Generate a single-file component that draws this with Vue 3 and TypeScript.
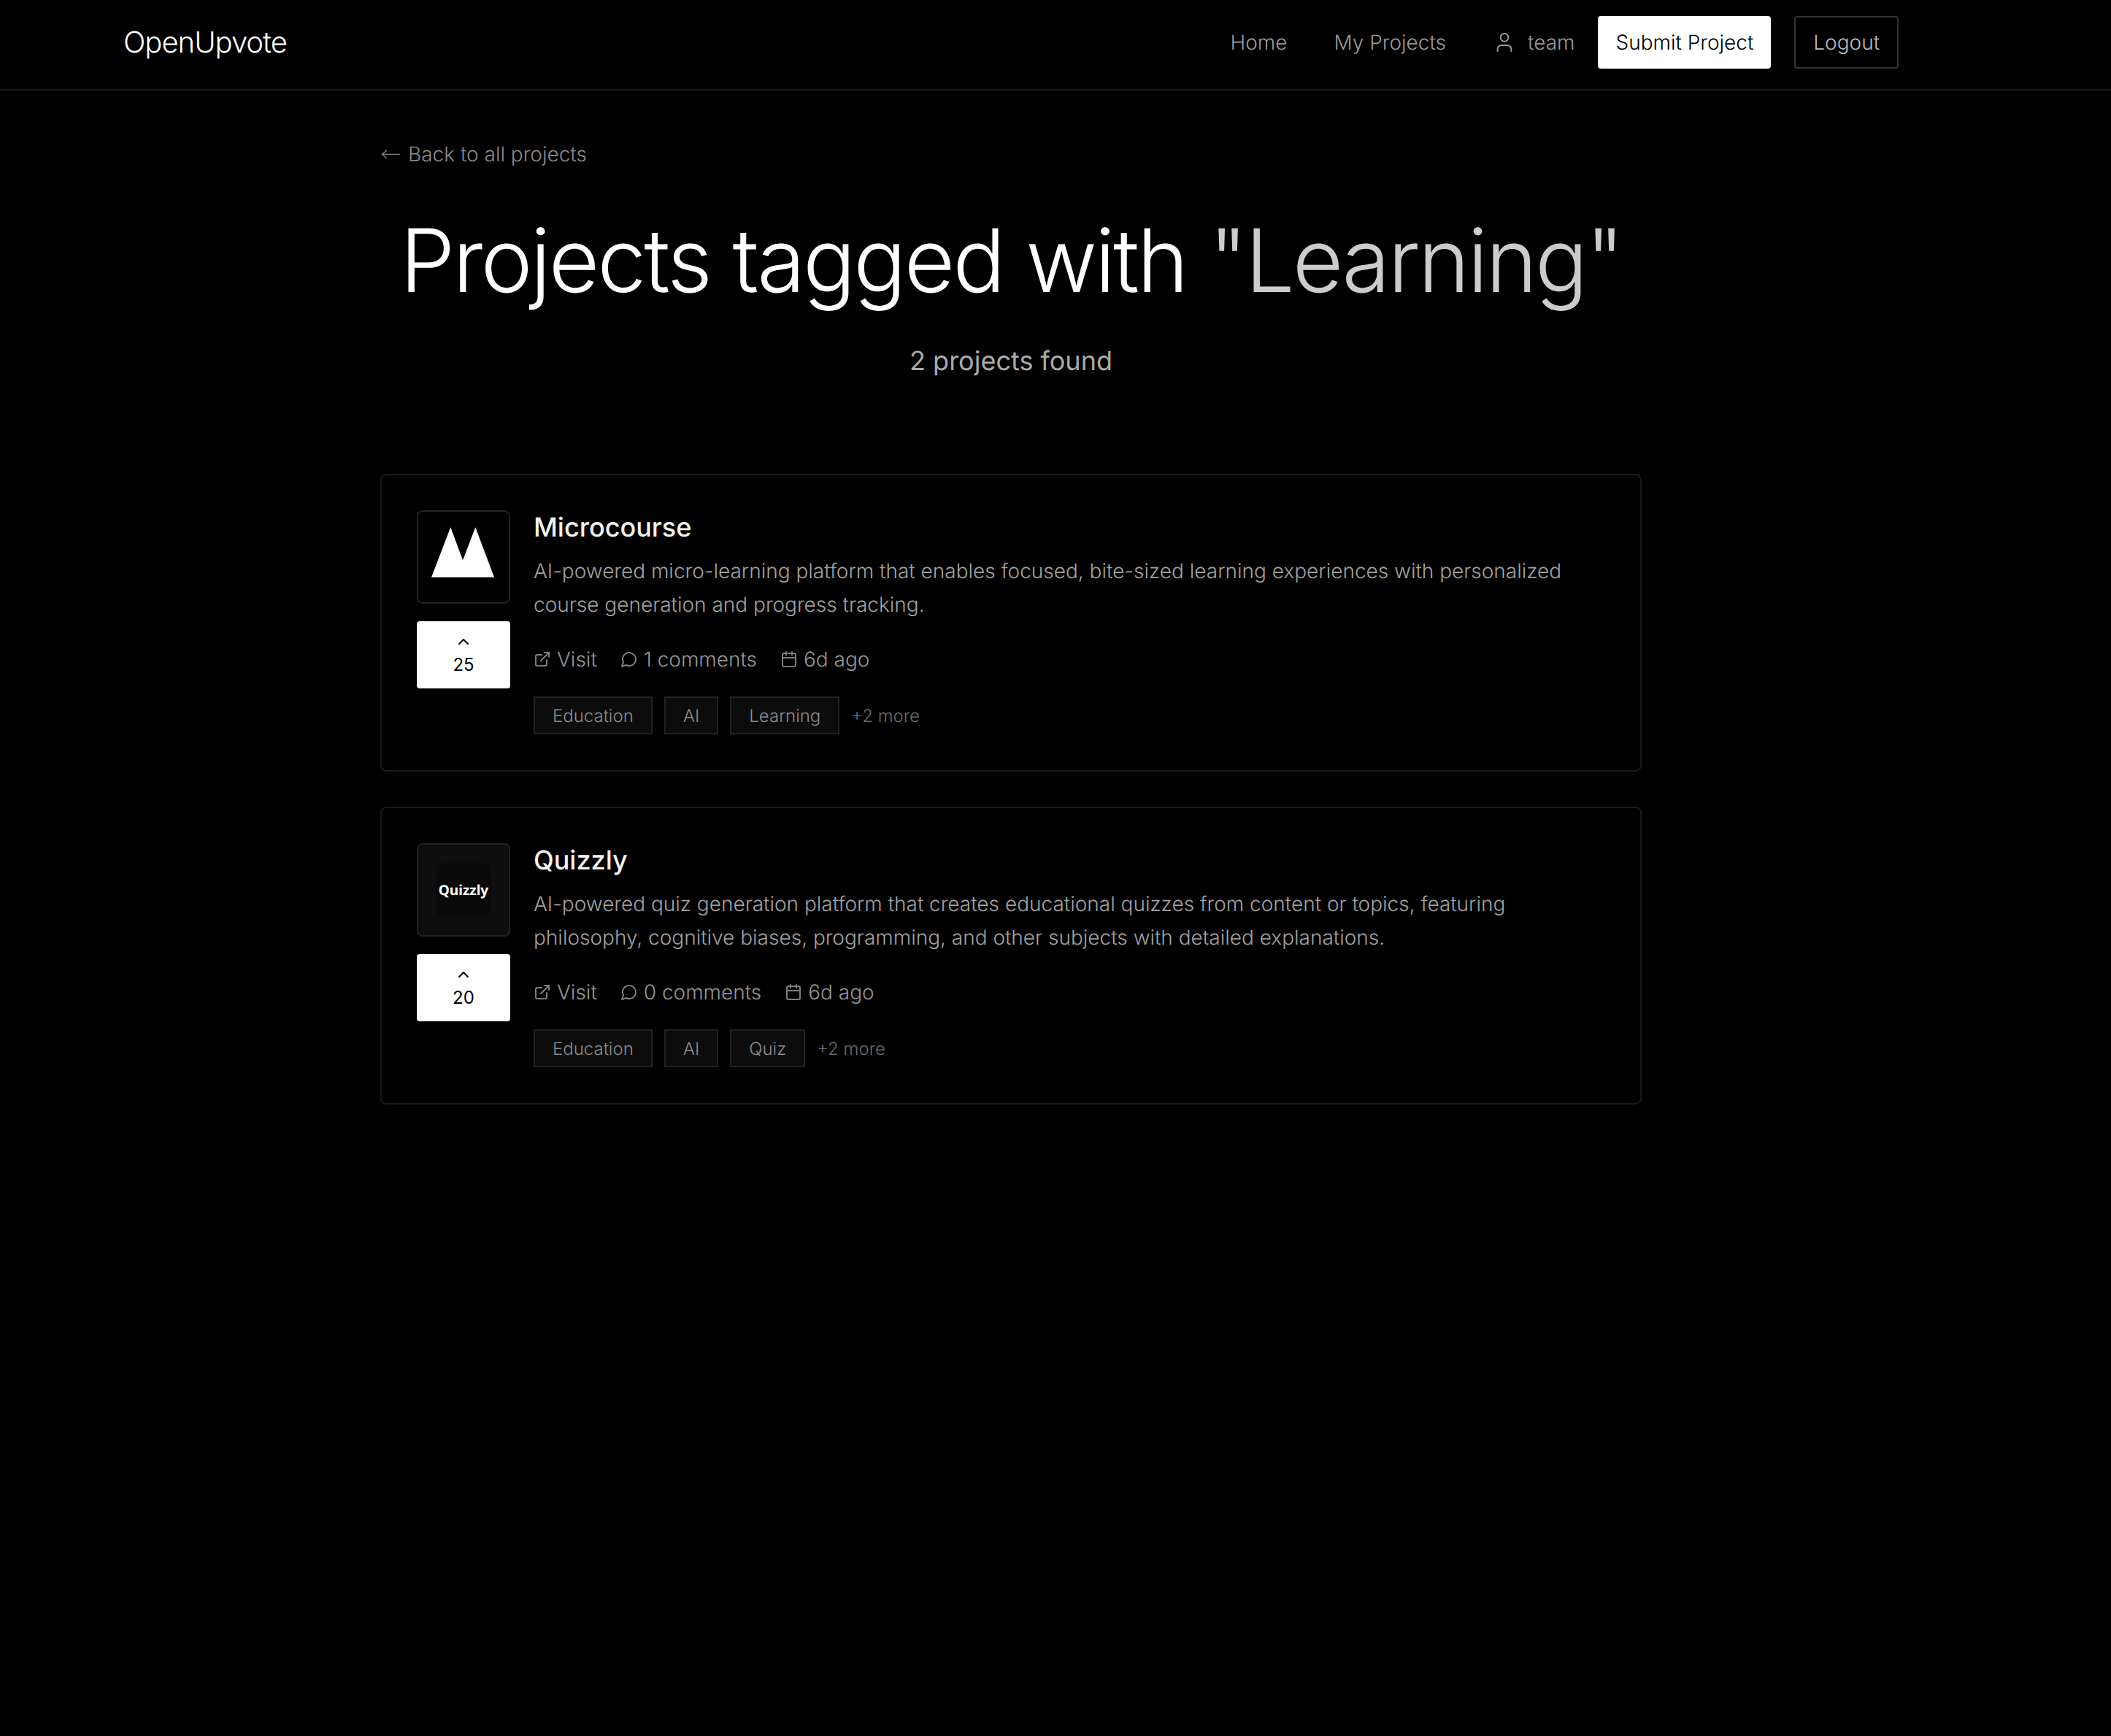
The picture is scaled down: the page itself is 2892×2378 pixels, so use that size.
<script setup lang="ts">
interface Project {
  name: string
  lines: string
  votes: number
  comments: string
  tags: string[]
  logo: 'mark' | 'text'
}

const projects: Project[] = [
  {
    name: 'Microcourse',
    lines: 'AI-powered micro-learning platform that enables focused, bite-sized learning experiences with personalized course generation and progress tracking.',
    votes: 25,
    comments: '1 comments',
    tags: ['Education', 'AI', 'Learning'],
    logo: 'mark',
  },
  {
    name: 'Quizzly',
    lines: 'AI-powered quiz generation platform that creates educational quizzes from content or topics, featuring philosophy, cognitive biases, programming, and other subjects with detailed explanations.',
    votes: 20,
    comments: '0 comments',
    tags: ['Education', 'AI', 'Quiz'],
    logo: 'text',
  },
]
</script>

<template>
  <div class="page">
    <header class="topbar">
      <div class="topbar-inner">
        <a class="brand">OpenUpvote</a>
        <nav class="nav">
          <a class="nav-link">Home</a>
          <a class="nav-link">My Projects</a>
          <span class="nav-user">
            <svg class="user-icon" viewBox="0 0 24 24" fill="none" stroke="currentColor" stroke-width="1.5" stroke-linecap="round" stroke-linejoin="round">
              <path d="M19 21v-2a4 4 0 0 0-4-4H9a4 4 0 0 0-4 4v2" />
              <circle cx="12" cy="7" r="4" />
            </svg>
            team
          </span>
          <a class="btn btn-primary">Submit Project</a>
          <a class="btn btn-outline">Logout</a>
        </nav>
      </div>
    </header>

    <div class="content">
      <main class="main">
        <a class="back"><span class="back-arrow">←</span>Back to all projects</a>
        <h1 class="title">Projects tagged with <span class="title-tag">"Learning"</span></h1>
        <p class="count">2 projects found</p>

        <div class="list">
          <article v-for="p in projects" :key="p.name" class="card">
            <div class="side">
              <div class="logo" :class="{ 'logo-soft': p.logo === 'text' }">
                <svg v-if="p.logo === 'mark'" class="logo-mark" viewBox="0 0 124 124">
                  <polygon points="18,89.7 44.3,21.3 61,66.3 78.3,21.3 104,89.7" fill="#fff" />
                </svg>
                <div v-else class="logo-word">Quizzly</div>
              </div>
              <button class="vote" type="button">
                <svg class="vote-icon" viewBox="0 0 24 24" fill="none" stroke="currentColor" stroke-width="2" stroke-linecap="round" stroke-linejoin="round">
                  <path d="m18 15-6-6-6 6" />
                </svg>
                <span class="vote-num">{{ p.votes }}</span>
              </button>
            </div>
            <div class="body">
              <h2 class="name">{{ p.name }}</h2>
              <p class="desc">{{ p.lines }}</p>
              <div class="meta">
                <span class="meta-item">
                  <svg class="meta-icon" viewBox="0 0 24 24" fill="none" stroke="currentColor" stroke-width="2" stroke-linecap="round" stroke-linejoin="round">
                    <path d="M15 3h6v6" />
                    <path d="M10 14 21 3" />
                    <path d="M18 13v6a2 2 0 0 1-2 2H5a2 2 0 0 1-2-2V8a2 2 0 0 1 2-2h6" />
                  </svg>
                  Visit
                </span>
                <span class="meta-item">
                  <svg class="meta-icon" viewBox="0 0 24 24" fill="none" stroke="currentColor" stroke-width="2" stroke-linecap="round" stroke-linejoin="round">
                    <path d="M7.9 20A9 9 0 1 0 4 16.1L2 22Z" />
                  </svg>
                  {{ p.comments }}
                </span>
                <span class="meta-item">
                  <svg class="meta-icon" viewBox="0 0 24 24" fill="none" stroke="currentColor" stroke-width="2" stroke-linecap="round" stroke-linejoin="round">
                    <path d="M8 2v4" />
                    <path d="M16 2v4" />
                    <rect x="3" y="4" width="18" height="18" rx="2" />
                    <path d="M3 10h18" />
                  </svg>
                  6d ago
                </span>
              </div>
              <div class="tags">
                <span v-for="t in p.tags" :key="t" class="tag">{{ t }}</span>
                <span class="more">+2 more</span>
              </div>
            </div>
          </article>
        </div>
      </main>
    </div>
  </div>
</template>

<style>
html,
body {
  margin: 0;
  background: #000;
}
</style>

<style scoped>
.page {
  min-height: 100vh;
  background: #000;
  color: #fff;
  font-family: Inter, "Liberation Sans", sans-serif;
  font-size: 28px;
  text-rendering: geometricPrecision;
}
.topbar {
  height: 124px;
  box-sizing: border-box;
  padding-right: 122px;
  border-bottom: 2px solid #1f1f1f;
}
.topbar-inner {
  max-width: 2560px;
  margin: 0 auto;
  padding: 22px 64px 0;
  box-sizing: border-box;
  display: flex;
  justify-content: space-between;
  align-items: center;
}
.brand {
  font-size: 40px;
  font-weight: 300;
  letter-spacing: -1px;
  line-height: 72px;
  color: #fff;
}
.nav {
  display: flex;
  align-items: center;
  gap: 32px;
  line-height: 40px;
}
.nav-link {
  padding: 0 16px;
  color: #999;
  font-weight: 300;
}
.nav-user {
  display: flex;
  align-items: center;
  gap: 16px;
  padding-left: 16px;
  color: #999;
  font-weight: 300;
}
.user-icon {
  width: 32px;
  height: 32px;
}
.btn {
  height: 72px;
  box-sizing: border-box;
  display: flex;
  align-items: center;
  padding: 0 24px;
  border-radius: 4px;
  font-weight: 300;
}
.btn-primary {
  background: #fff;
  color: #000;
}
.btn-outline {
  border: 2px solid #333;
  color: #bbb;
}
.content {
  padding-right: 122px;
}
.main {
  max-width: 1792px;
  margin: 0 auto;
  padding: 67px 32px 0;
  box-sizing: border-box;
}
.back {
  display: flex;
  align-items: center;
  gap: 10px;
  line-height: 40px;
  color: #8a8a8a;
  font-weight: 300;
}
.back-arrow {
  font-family: "Noto Sans CJK SC", "Liberation Sans", sans-serif;
  color: #808080;
}
.title {
  margin: 66px 0 0;
  font-size: 120px;
  line-height: 120px;
  font-weight: 300;
  letter-spacing: -3px;
  text-align: center;
  color: #fff;
}
.title-tag {
  color: #ccc;
}
.count {
  margin: 49px 0 0;
  text-align: center;
  font-size: 36px;
  line-height: 56px;
  color: #aaa;
}
.list {
  margin-top: 127px;
  display: flex;
  flex-direction: column;
  gap: 48px;
}
.card {
  display: flex;
  gap: 32px;
  padding: 48px 48px 49px;
  border: 2px solid #1a1a1a;
  border-radius: 8px;
}
.side {
  width: 128px;
  flex: none;
  display: flex;
  flex-direction: column;
  gap: 24px;
}
.logo {
  width: 128px;
  height: 128px;
  box-sizing: border-box;
  border: 2px solid #222;
  border-radius: 8px;
  display: flex;
  align-items: center;
  justify-content: center;
}
.logo-soft {
  background: #0e0e0e;
}
.logo-mark {
  width: 100%;
  height: 100%;
  display: block;
}
.logo-word {
  width: 76px;
  height: 74px;
  background: #0a0a0a;
  border-radius: 12px;
  display: flex;
  align-items: center;
  justify-content: center;
  font-family: "Noto Sans", sans-serif;
  font-size: 19px;
  font-weight: 700;
  color: #fff;
  white-space: nowrap;
}
.vote {
  width: 128px;
  height: 92px;
  box-sizing: border-box;
  padding: 16px 0;
  background: #fff;
  color: #000;
  border: 0;
  border-radius: 4px;
  display: flex;
  flex-direction: column;
  align-items: center;
  gap: 4px;
  font-family: inherit;
}
.vote-icon {
  width: 24px;
  height: 24px;
  display: block;
}
.vote-num {
  font-size: 24px;
  line-height: 32px;
}
.body {
  flex: 1;
  min-width: 0;
}
.name {
  margin: 0;
  font-size: 36px;
  line-height: 46px;
  font-weight: 500;
  color: #f2f2f2;
}
.desc {
  margin: 14px 0 0;
  line-height: 46px;
  color: #a0a0a0;
  font-weight: 300;
}
.meta {
  margin-top: 32px;
  display: flex;
  gap: 32px;
  line-height: 40px;
  color: #959595;
  font-weight: 300;
}
.meta-item {
  display: flex;
  align-items: center;
  gap: 8px;
}
.meta-icon {
  width: 24px;
  height: 24px;
  opacity: 0.85;
}
.tags {
  margin-top: 31px;
  display: flex;
  align-items: center;
  gap: 16px;
}
.tag {
  height: 52px;
  box-sizing: border-box;
  display: flex;
  align-items: center;
  padding: 0 24px;
  background: #0c0c0c;
  border: 2px solid #222;
  font-size: 24px;
  font-weight: 300;
  color: #8c8c8c;
}
.more {
  font-size: 24px;
  font-weight: 300;
  color: #6c6c6c;
}
</style>
